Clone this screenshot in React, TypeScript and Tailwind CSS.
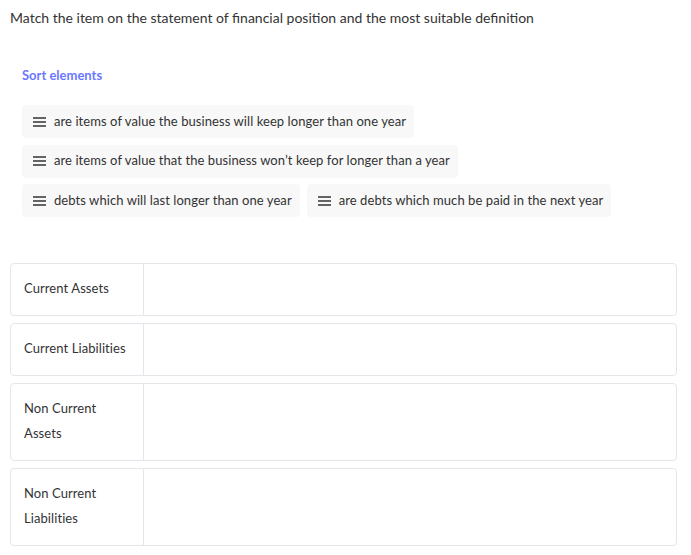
import React from "react";

const chips = [
  ["are items of value the business will keep longer than one year"],
  ["are items of value that the business won’t keep for longer than a year"],
  ["debts which will last longer than one year", "are debts which much be paid in the next year"],
];

const rows = ["Current Assets", "Current Liabilities", "Non Current Assets", "Non Current Liabilities"];

function DragIcon() {
  return (
    <svg width="13" height="10" viewBox="0 0 13 10" className="shrink-0">
      <path d="M0 1h13M0 5h13M0 9h13" stroke="#333" strokeWidth="1.5" />
    </svg>
  );
}

function Chip({ text }: { text: string }) {
  return (
    <div className="flex items-center gap-2 h-[33px] pl-[11px] pr-2 rounded bg-[#f8f8f8] text-[13px] tracking-[0.07px] text-[#333] [font-variant-ligatures:none]">
      <DragIcon />
      <span>{text}</span>
    </div>
  );
}

export default function App() {
  return (
    <div className="pl-[10px] pr-[14px] pt-2 font-['Lato',sans-serif] text-[#333]">
      <p className="text-[14px] leading-5">
        Match the item on the statement of financial position and the most suitable definition
      </p>

      <div className="pl-3 mt-[37px] text-[13px] leading-5 font-bold text-[#6a78ff]">Sort elements</div>

      <div className="pl-3 mt-5 flex flex-col gap-[6.5px]">
        {chips.map((line, i) => (
          <div key={i} className="flex gap-[7px]">
            {line.map((t) => (
              <Chip key={t} text={t} />
            ))}
          </div>
        ))}
      </div>

      <div className="mt-[46px] flex flex-col gap-[7.5px]">
        {rows.map((r) => (
          <div key={r} className="flex border border-[#e3e6eb] rounded">
            <div className="w-[133px] shrink-0 border-r border-[#e3e6eb] pl-[13px] pr-[13px] pt-3 pb-[13.5px] text-[13px] leading-[25px] tracking-[0.08px] [font-variant-ligatures:none]">
              {r}
            </div>
            <div className="flex-1" />
          </div>
        ))}
      </div>
    </div>
  );
}
